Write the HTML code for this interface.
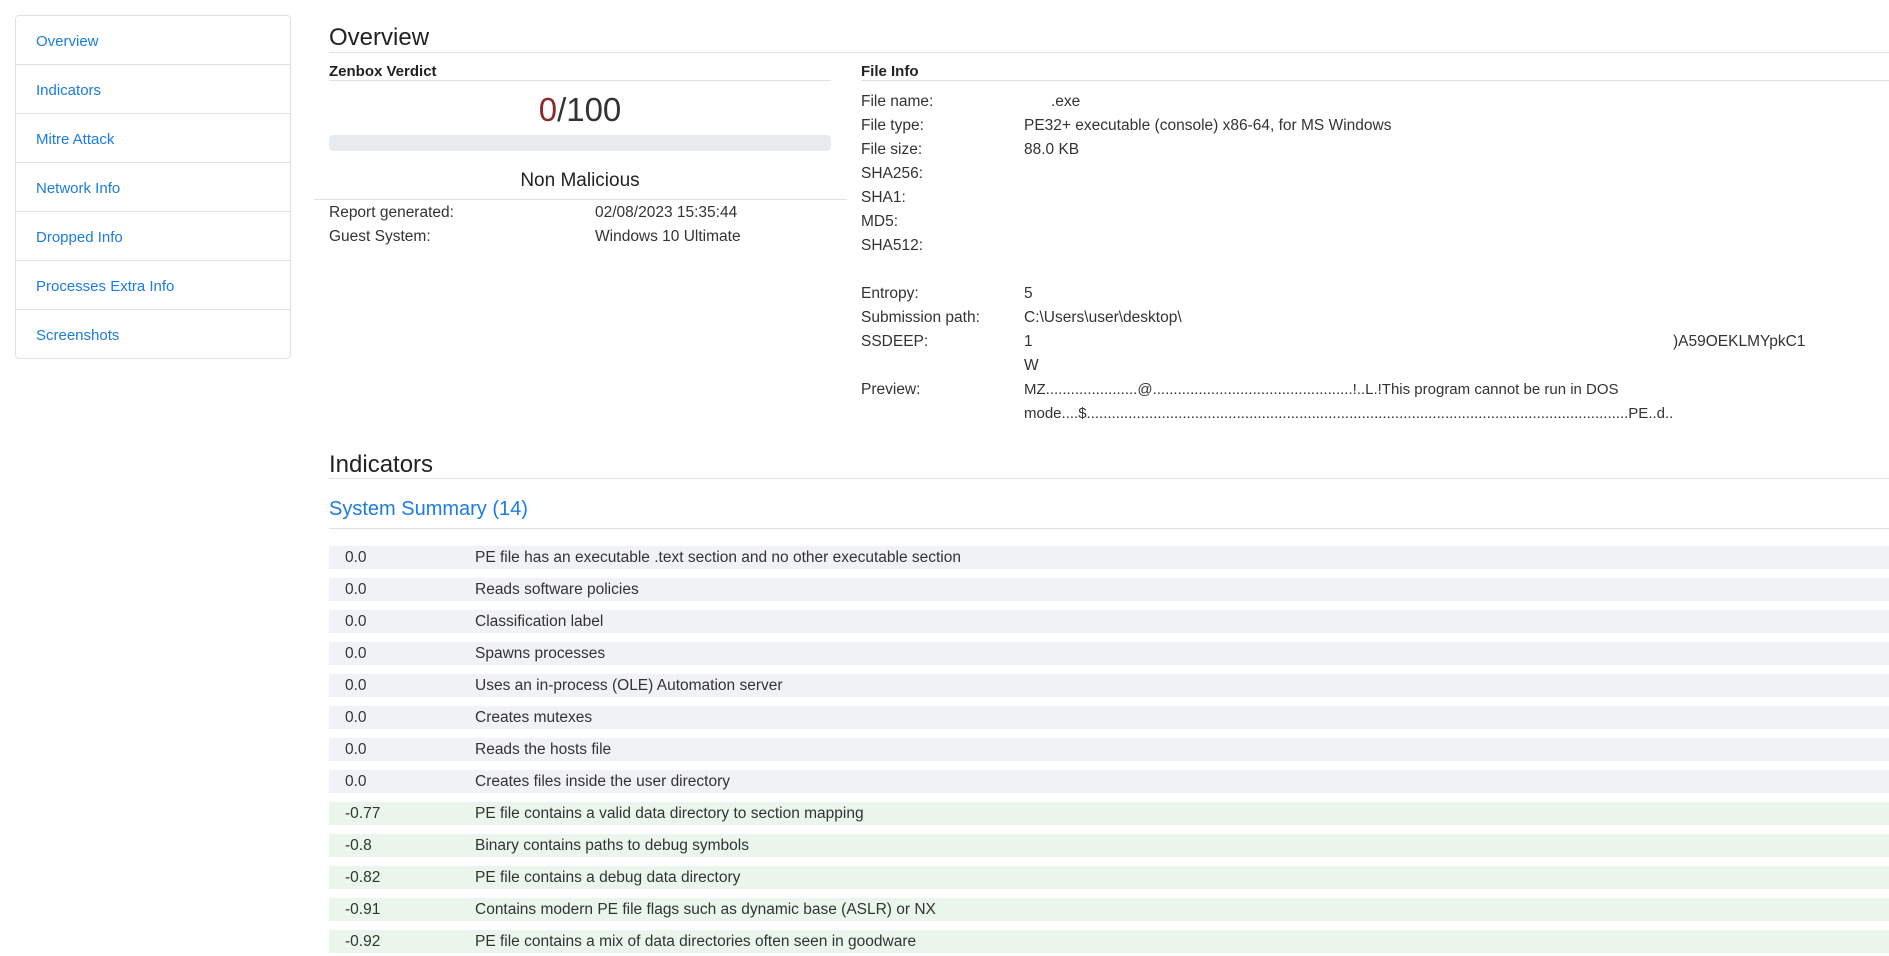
<!DOCTYPE html>
<html><head><meta charset="utf-8"><style>
*{margin:0;padding:0;box-sizing:border-box}
body{width:1889px;height:956px;overflow:hidden;background:#fff;font-family:"Liberation Sans",Arial,sans-serif;color:#333;font-size:15.5px;position:relative}
.a{position:absolute;white-space:nowrap}
.side{position:absolute;left:15px;top:15px;width:276px;height:344px;border:1px solid #dee2e6;border-radius:4px}
.side div{height:49px;border-bottom:1px solid #dee2e6;padding-left:20px;line-height:51px;color:#1c7ce0;font-size:15px}
.side div:last-child{border-bottom:none}
.hl{position:absolute;height:1px;background:#dfe1e6}
.row{position:absolute;left:329px;right:0;height:23px;line-height:24px;background:#f1f2f6}
.row.g{background:#eaf6ec}
.row span{position:absolute;left:16px}
.row b{font-weight:normal;position:absolute;left:146px}
.t{margin-top:1px}
</style></head><body>
<div class="side"><div>Overview</div><div>Indicators</div><div>Mitre Attack</div><div>Network Info</div><div>Dropped Info</div><div>Processes Extra Info</div><div>Screenshots</div></div>

<div class="a" style="left:329px;top:24px;font-size:24px;color:#222">Overview</div>
<div class="hl" style="left:329px;right:0;top:52px"></div>
<div class="a" style="left:329px;top:63px;font-size:15px;font-weight:bold;color:#222">Zenbox Verdict</div>
<div class="hl" style="left:329px;width:502px;top:80px"></div>
<div class="a" style="left:480px;width:200px;text-align:center;top:91px;font-size:33px;color:#333"><span style="color:#8b2c2c">0</span>/100</div>
<div class="a" style="left:329px;width:502px;top:135px;height:16px;background:#e9ecef;border-radius:4px"></div>
<div class="a" style="left:480px;width:200px;text-align:center;top:170px;font-size:19px;color:#222">Non Malicious</div>
<div class="hl" style="left:314px;width:533px;top:199px"></div>
<div class="a" style="left:329px;top:204px">Report generated:</div>
<div class="a" style="left:595px;top:204px">02/08/2023 15:35:44</div>
<div class="a" style="left:329px;top:228px">Guest System:</div>
<div class="a" style="left:595px;top:228px">Windows 10 Ultimate</div>

<div class="a" style="left:861px;top:63px;font-size:15px;font-weight:bold;color:#222">File Info</div>
<div class="hl" style="left:861px;right:0;top:80px"></div>
<div class="a" style="left:861px;top:93px">File name:</div><div class="a" style="left:1051px;top:93px">.exe</div>
<div class="a" style="left:861px;top:117px">File type:</div><div class="a" style="left:1024px;top:117px">PE32+ executable (console) x86-64, for MS Windows</div>
<div class="a" style="left:861px;top:141px">File size:</div><div class="a" style="left:1024px;top:141px">88.0 KB</div>
<div class="a" style="left:861px;top:165px">SHA256:</div>
<div class="a" style="left:861px;top:189px">SHA1:</div>
<div class="a" style="left:861px;top:213px">MD5:</div>
<div class="a" style="left:861px;top:237px">SHA512:</div>
<div class="a" style="left:861px;top:285px">Entropy:</div><div class="a" style="left:1024px;top:285px">5</div>
<div class="a" style="left:861px;top:309px">Submission path:</div><div class="a" style="left:1024px;top:309px">C:\Users\user\desktop\</div>
<div class="a" style="left:861px;top:333px">SSDEEP:</div><div class="a" style="left:1024px;top:333px">1</div><div class="a" style="left:1673px;top:333px">)A59OEKLMYpkC1</div>
<div class="a" style="left:1024px;top:357px">W</div>
<div class="a" style="left:861px;top:381px">Preview:</div><div class="a" style="left:1024px;top:381px;font-size:15px">MZ......................@................................................!..L.!This program cannot be run in DOS</div>
<div class="a" style="left:1024px;top:405px;font-size:15px">mode....$..................................................................................................................................PE..d..</div>

<div class="a" style="left:329px;top:451px;font-size:24px;color:#222">Indicators</div>
<div class="hl" style="left:329px;right:0;top:478px"></div>
<div class="a" style="left:329px;top:498px;font-size:20px;color:#1c7ce0">System Summary (14)</div>
<div class="hl" style="left:329px;right:0;top:528px"></div>

<div class="row" style="top:546px"><span>0.0</span><b>PE file has an executable .text section and no other executable section</b></div>
<div class="row" style="top:578px"><span>0.0</span><b>Reads software policies</b></div>
<div class="row" style="top:610px"><span>0.0</span><b>Classification label</b></div>
<div class="row" style="top:642px"><span>0.0</span><b>Spawns processes</b></div>
<div class="row" style="top:674px"><span>0.0</span><b>Uses an in-process (OLE) Automation server</b></div>
<div class="row" style="top:706px"><span>0.0</span><b>Creates mutexes</b></div>
<div class="row" style="top:738px"><span>0.0</span><b>Reads the hosts file</b></div>
<div class="row" style="top:770px"><span>0.0</span><b>Creates files inside the user directory</b></div>
<div class="row g" style="top:802px"><span>-0.77</span><b>PE file contains a valid data directory to section mapping</b></div>
<div class="row g" style="top:834px"><span>-0.8</span><b>Binary contains paths to debug symbols</b></div>
<div class="row g" style="top:866px"><span>-0.82</span><b>PE file contains a debug data directory</b></div>
<div class="row g" style="top:898px"><span>-0.91</span><b>Contains modern PE file flags such as dynamic base (ASLR) or NX</b></div>
<div class="row g" style="top:930px"><span>-0.92</span><b>PE file contains a mix of data directories often seen in goodware</b></div>
</body></html>
